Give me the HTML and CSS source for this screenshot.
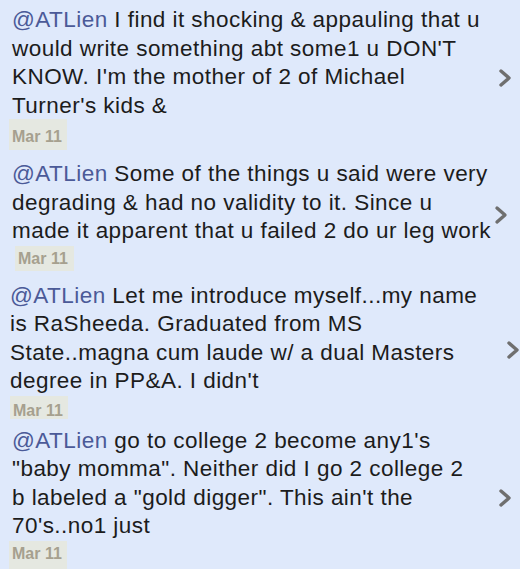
FILE: index.html
```html
<!DOCTYPE html>
<html>
<head>
<meta charset="utf-8">
<link rel="stylesheet" href="styles.css">
</head>
<body>
<div class="feed">
  <div class="tweet t1">
    <div class="body">
      <p class="text"><span class="mention">@ATLien</span> I find it shocking &amp; appauling that u<br>would write something abt some1 u DON'T<br>KNOW. I'm the mother of 2 of Michael<br>Turner's kids &amp;</p>
      <span class="date">Mar 11</span>
    </div>
    <svg class="chev" viewBox="0 0 14 20" width="14" height="20"><polyline points="3,3 11,10 3,17"/></svg>
  </div>
  <div class="tweet t2">
    <div class="body">
      <p class="text"><span class="mention">@ATLien</span> Some of the things u said were very<br>degrading &amp; had no validity to it. Since u<br>made it apparent that u failed 2 do ur leg work</p>
      <span class="date">Mar 11</span>
    </div>
    <svg class="chev" viewBox="0 0 14 20" width="14" height="20"><polyline points="3,3 11,10 3,17"/></svg>
  </div>
  <div class="tweet t3">
    <div class="body">
      <p class="text"><span class="mention">@ATLien</span> Let me introduce myself...my name<br>is RaSheeda. Graduated from MS<br>State..magna cum laude w/ a dual Masters<br>degree in PP&amp;A. I didn't</p>
      <span class="date">Mar 11</span>
    </div>
    <svg class="chev" viewBox="0 0 14 20" width="14" height="20"><polyline points="3,3 11,10 3,17"/></svg>
  </div>
  <div class="tweet t4">
    <div class="body">
      <p class="text"><span class="mention">@ATLien</span> go to college 2 become any1's<br>"baby momma". Neither did I go 2 college 2<br>b labeled a "gold digger". This ain't the<br>70's..no1 just</p>
      <span class="date">Mar 11</span>
    </div>
    <svg class="chev" viewBox="0 0 14 20" width="14" height="20"><polyline points="3,3 11,10 3,17"/></svg>
  </div>
</div>
</body>
</html>
```
FILE: styles.css
```css
html, body {
  margin: 0;
  padding: 0;
  background: #dfe9fb;
}
body {
  font-family: "Liberation Sans", Arial, Helvetica, sans-serif;
  color: #1c1c1c;
}
.feed {
  display: flex;
  flex-direction: column;
  width: 520px;
  height: 569px;
  overflow: hidden;
}
.tweet {
  display: flex;
  flex: none;
  align-items: center;
  justify-content: space-between;
  padding: 0 8px 0 12px;
}
.body {
  display: flex;
  flex-direction: column;
  align-items: flex-start;
  min-width: 0;
}
.text {
  margin: 0;
  font-size: 22.5px;
  letter-spacing: 0.45px;
  line-height: 28.5px;
  white-space: nowrap;
}
.mention {
  color: #4b5a98;
}
.date {
  display: inline-block;
  margin-left: -3px;
  padding: 5px 5px 4px 3px;
  font-size: 16px;
  font-weight: bold;
  line-height: 16px;
  color: #a6a08f;
  background: #e5e8e1;
}
.chev {
  flex: none;
  fill: none;
  stroke: #6f6f6f;
  stroke-width: 3.4;
  stroke-linecap: round;
  stroke-linejoin: round;
}
.t1 { padding-top: 6px; }
.t1 .date { margin-top: -1px; padding-top: 10px; padding-bottom: 5px; }
.t2 { padding-top: 10px; padding-right: 12px; }
.t2 .date { margin-left: 3px; padding-right: 6px; }
.t3 { padding-top: 11px; padding-left: 10px; padding-right: 0; }
.t3 .date { margin-left: 0; padding-top: 7px; padding-bottom: 0; }
.t4 { padding-top: 8px; }
.t4 .date { padding-top: 5px; padding-bottom: 8px; }
```
